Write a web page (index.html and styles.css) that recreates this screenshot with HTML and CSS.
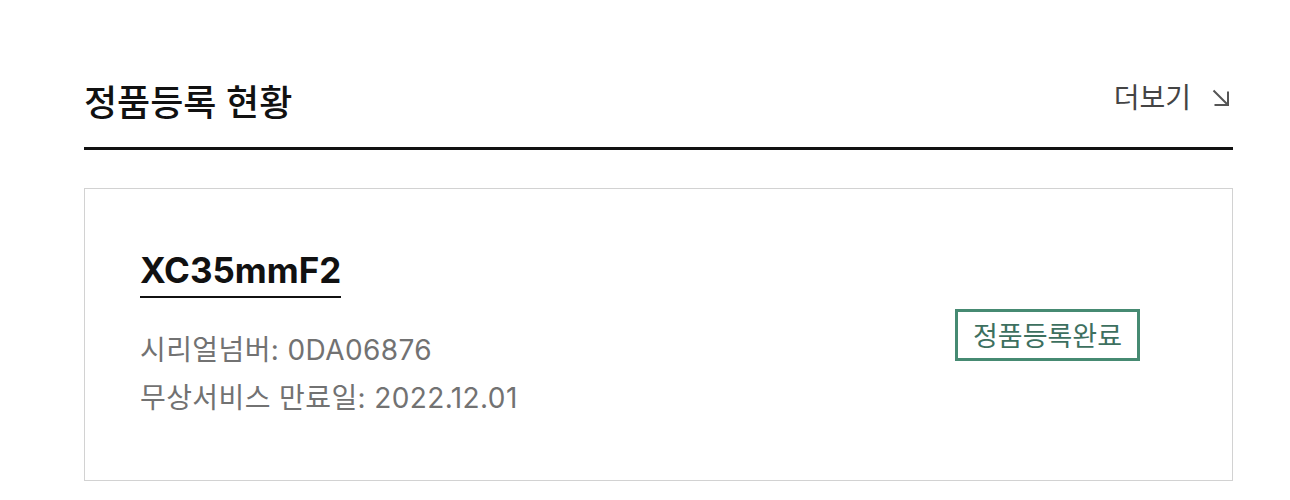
FILE: index.html
```html
<!DOCTYPE html>
<html lang="ko">
<head>
<meta charset="utf-8">
<title>정품등록 현황</title>
<link rel="stylesheet" href="styles.css">
</head>
<body>
<section class="wrap">
  <header class="head">
    <h2 class="title">정품등록 현황</h2>
    <a class="more" href="#">더보기
      <svg class="more-icon" width="20" height="20" viewBox="0 0 20 20" aria-hidden="true">
        <path d="M2.5 2.5 L16.5 16.5 M17 3.5 V17 H3.5" fill="none" stroke="#555" stroke-width="2"/>
      </svg>
    </a>
  </header>
  <div class="card">
    <div class="info">
      <div class="name-row"><span class="name">XC35mmF2</span></div>
      <p class="meta">시리얼넘버: 0DA06876</p>
      <p class="meta">무상서비스 만료일: 2022.12.01</p>
    </div>
    <span class="badge">정품등록완료</span>
  </div>
</section>
</body>
</html>
```

FILE: styles.css
```css
html, body {
  margin: 0;
  padding: 0;
  background: #fff;
}
body {
  font-family: "Inter", "Noto Sans CJK KR", sans-serif;
  color: #111;
}
.wrap {
  width: 1149px;
  margin-left: 84px;
}
.head {
  display: flex;
  justify-content: space-between;
  align-items: flex-start;
  padding: 80px 0 21px;
  border-bottom: 3px solid #111;
}
.title {
  margin: 0;
  font-size: 36px;
  line-height: 46px;
  font-weight: 500;
  color: #111;
}
.more {
  display: flex;
  align-items: center;
  gap: 20px;
  font-size: 28px;
  line-height: 36px;
  color: #444;
  text-decoration: none;
  margin-right: 2px;
}
.more-icon {
  display: block;
}
.card {
  margin-top: 38px;
  height: 293px;
  box-sizing: border-box;
  border: 1px solid #d2d2d2;
  display: flex;
  align-items: center;
  justify-content: space-between;
  padding: 0 92px 0 55px;
}
.info {
  display: flex;
  flex-direction: column;
}
.name-row {
  margin-bottom: 28px;
}
.name {
  display: inline-block;
  font-size: 35px;
  line-height: 44px;
  font-weight: 700;
  color: #111;
  padding-bottom: 4px;
  border-bottom: 2px solid #111;
}
.meta {
  margin: 0;
  font-size: 28px;
  line-height: 48px;
  letter-spacing: 0.4px;
  color: #727272;
}
.badge {
  display: inline-block;
  border: 3px solid #468a72;
  color: #3d705f;
  font-family: "Noto Sans CJK KR", sans-serif;
  font-size: 27px;
  font-weight: 400;
  line-height: 46px;
  padding: 0 15px;
}
```
